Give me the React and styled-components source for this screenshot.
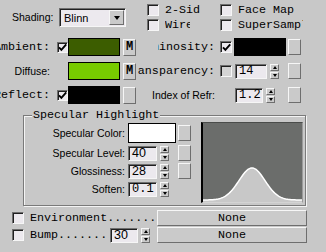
import React from "react";
import styled, { createGlobalStyle, css } from "styled-components";

const SANS = `"Liberation Sans", Arial, sans-serif`;
const MONO = `"Liberation Mono", "Courier New", monospace`;

const GlobalStyle = createGlobalStyle`
  html, body {
    margin: 0;
    padding: 0;
    background: #c8c8c8;
  }
`;

const raised = css`
  box-sizing: border-box;
  background: #cacaca;
  border: 1px solid;
  border-color: #f6f6f6 #6e6e6e #6e6e6e #f6f6f6;
`;

const sunken = css`
  box-sizing: border-box;
  background: #ece9ee;
  border: 1px solid;
  border-color: #6e6e6e #f6f6f6 #f6f6f6 #6e6e6e;
  box-shadow: inset 1px 1px 0 #202020;
`;

const Panel = styled.div`
  width: 326px;
  height: 252px;
  overflow: hidden;
  background: #c8c8c8;
  color: #000;
  font-family: ${MONO};
  font-size: 11.7px;
`;

const Text = styled.span`
  font-family: ${({ $sans }) => ($sans ? SANS : MONO)};
  font-size: ${({ $sans }) => ($sans ? "10.5px" : "11.7px")};
  line-height: 13px;
  white-space: nowrap;
  flex: none;
`;

/* shading dropdown + flags */
const TopRow = styled.div`
  display: flex;
  align-items: flex-start;
  height: 38px;
`;

const ShadingBox = styled.div`
  display: flex;
  align-items: center;
  margin: 8px 0 0 12px;
`;

const ShadingLabel = styled(Text)`
  width: 47px;
`;

const Dropdown = styled.div`
  ${sunken};
  width: 67px;
  height: 19px;
  display: flex;
  align-items: center;
  padding: 0 1px 0 4px;
`;

const DropText = styled.span`
  flex: 1;
  font-family: ${SANS};
  font-size: 11px;
`;

const DropButton = styled.div`
  ${raised};
  width: 15px;
  height: 15px;
  display: flex;
  align-items: center;
  justify-content: center;
`;

const Triangle = styled.span`
  width: 0;
  height: 0;
  border-left: ${({ $w }) => $w}px solid transparent;
  border-right: ${({ $w }) => $w}px solid transparent;
  ${({ $up, $h }) =>
    $up ? `border-bottom: ${$h}px solid #000;` : `border-top: ${$h}px solid #000;`}
`;

const FlagColumn = styled.div`
  display: flex;
  flex-direction: column;
  gap: 3px;
  margin: 4px 0 0 ${({ $ml }) => $ml}px;
  width: ${({ $w }) => $w}px;
`;

const FlagItem = styled.div`
  display: flex;
  align-items: center;
  height: 12px;
  gap: 6px;
`;

const FlagText = styled(Text)`
  max-width: ${({ $clip }) => $clip}px;
  overflow: hidden;
`;

const CheckBox = styled.span`
  ${sunken};
  flex: none;
  display: flex;
  align-items: center;
  justify-content: center;
  width: ${({ $size }) => $size}px;
  height: ${({ $size }) => $size}px;
  background: ${({ $dim }) => ($dim ? "#d4d4d4" : "#ece9ee")};
`;

const Check = ({ checked, dim, size = 12 }) => (
  <CheckBox $dim={dim} $size={size}>
    {checked && (
      <svg width="9" height="9" viewBox="0 0 9 9">
        <path d="M1 4.3 L3.4 6.9 L8.2 1.4" fill="none" stroke="#000" strokeWidth="1.9" />
      </svg>
    )}
  </CheckBox>
);

/* colour / value rows */
const MatRows = styled.div`
  display: flex;
  flex-direction: column;
  gap: 6px;
`;

const MatRow = styled.div`
  display: flex;
  align-items: center;
  height: 18px;
`;

const LeftLabel = styled.div`
  width: 57px;
  flex: none;
  display: flex;
  justify-content: flex-end;
  padding-right: 7px;
  box-sizing: border-box;
`;

const CheckSlot = styled.div`
  width: ${({ $w }) => $w}px;
  margin-left: ${({ $ml }) => $ml || 0}px;
  flex: none;
  display: flex;
  align-items: center;
`;

const Swatch = styled.div`
  flex: none;
  width: ${({ $w }) => $w}px;
  height: ${({ $h }) => $h || 18}px;
  box-sizing: border-box;
  border: 1px solid #000;
  background: ${({ $color }) => $color};
`;

const MapButton = styled.div`
  ${raised};
  flex: none;
  width: 13px;
  height: 17px;
  margin-left: 3px;
  display: flex;
  align-items: center;
  justify-content: center;
  font-family: ${MONO};
  font-weight: bold;
  font-size: 12px;
`;

const RightLabel = styled.div`
  width: 81px;
  flex: none;
  overflow: hidden;
  display: flex;
  justify-content: flex-end;
  padding-right: 2px;
  box-sizing: border-box;
`;

const LabelClip = styled.div`
  flex: none;
  display: flex;
  justify-content: flex-end;
  overflow: hidden;
  ${({ $clip }) => $clip && `max-width: ${$clip}px;`}
`;

const ControlSlot = styled.div`
  width: ${({ $w }) => $w}px;
  margin-left: ${({ $ml }) => $ml || 0}px;
  flex: none;
  display: flex;
  align-items: center;
`;

const SideButton = styled.div`
  ${raised};
  flex: none;
  width: 13px;
  height: 16px;
  margin-left: ${({ $ml }) => $ml || 0}px;
`;

/* spinner */
const SpinWrap = styled.div`
  display: flex;
  align-items: center;
  flex: none;
  margin-left: ${({ $ml }) => $ml || 0}px;
`;

const SpinField = styled.div`
  ${sunken};
  width: ${({ $w }) => $w}px;
  height: 15px;
  padding-left: 3px;
  display: flex;
  align-items: center;
  font-family: ${({ $sans }) => ($sans ? SANS : MONO)};
  font-size: ${({ $sans }) => ($sans ? "12.5px" : "12px")};
`;

const SpinArrows = styled.div`
  display: flex;
  flex-direction: column;
  gap: 1px;
  margin-left: 3px;
`;

const ArrowHalf = styled.div`
  ${raised};
  width: 9px;
  height: 7px;
  display: flex;
  align-items: center;
  justify-content: center;
`;

const Spinner = ({ value, w, sans, ml }) => (
  <SpinWrap $ml={ml}>
    <SpinField $w={w} $sans={sans}>{value}</SpinField>
    <SpinArrows>
      <ArrowHalf><Triangle $up $w={2.5} $h={3} /></ArrowHalf>
      <ArrowHalf><Triangle $w={2.5} $h={3} /></ArrowHalf>
    </SpinArrows>
  </SpinWrap>
);

/* specular group */
const Group = styled.fieldset`
  margin: 5px 0 0 23px;
  width: 283px;
  min-width: 0;
  box-sizing: border-box;
  padding: 1px 2px 2px 0;
  border: 1px solid #7a7a7a;
  box-shadow: inset 1px 1px 0 #f4f4f4, 1px 1px 0 #f4f4f4;
`;

const Legend = styled.legend`
  margin-left: 8px;
  padding: 0 1px;
  background: #c8c8c8;
  font-family: ${MONO};
  font-size: 11.7px;
  line-height: 12px;
`;

const GroupBody = styled.div`
  display: flex;
  align-items: flex-start;
`;

const GroupRows = styled.div`
  width: 177px;
  flex: none;
  display: flex;
  flex-direction: column;
  gap: 2px;
  padding-top: 1px;
`;

const GroupRow = styled.div`
  display: flex;
  align-items: center;
  height: ${({ $h }) => $h}px;
`;

const GroupLabel = styled.div`
  width: 104px;
  flex: none;
  text-align: right;
  padding-right: 3px;
  box-sizing: border-box;
  font-family: ${SANS};
  font-size: 10.5px;
  white-space: nowrap;
`;

const Graph = styled.div`
  width: 102px;
  height: 81px;
  flex: none;
  box-sizing: border-box;
  background: #6b6d6b;
  border-left: 2px solid #000;
  border-top: 1px solid #4a4c4a;
  border-right: 1px solid #9a9a9a;
  border-bottom: 1px solid #d4d4d4;

  svg {
    display: block;
  }
`;

const bellPoints = () => {
  const pts = [];
  for (let x = 0; x <= 99; x += 1) {
    const y = 77 - 32 * Math.exp(-((x - 49) * (x - 49)) / (2 * 13 * 13));
    pts.push(`${x},${y.toFixed(2)}`);
  }
  return pts;
};

const HighlightCurve = () => {
  const pts = bellPoints();
  return (
    <svg width="99" height="79" viewBox="0 0 99 79">
      <path d={`M0,79 L${pts.join(" L")} L99,79 Z`} fill="#c8c8c8" />
      <path d={`M${pts.join(" L")}`} fill="none" stroke="#fff" strokeWidth="1.5" />
    </svg>
  );
};

/* map slots */
const BottomRows = styled.div`
  display: flex;
  flex-direction: column;
  gap: 1px;
  margin-top: 4px;
`;

const BottomRow = styled.div`
  display: flex;
  align-items: center;
  height: 16px;
  padding-left: 12px;
`;

const BottomLeft = styled.div`
  width: 145px;
  flex: none;
  display: flex;
  align-items: center;
`;

const MapLabel = styled(Text)`
  margin-left: 6px;
  width: ${({ $w }) => $w}px;
`;

const NoneButton = styled.div`
  ${raised};
  width: 150px;
  height: 16px;
  display: flex;
  align-items: center;
  justify-content: center;
  font-family: ${MONO};
  font-size: 11.7px;
`;

export default function App() {
  return (
    <>
      <GlobalStyle />
      <Panel>
        <TopRow>
          <ShadingBox>
            <ShadingLabel $sans>Shading:</ShadingLabel>
            <Dropdown>
              <DropText>Blinn</DropText>
              <DropButton>
                <Triangle $w={3.5} $h={4} />
              </DropButton>
            </Dropdown>
          </ShadingBox>
          <FlagColumn $ml={21} $w={73}>
            <FlagItem>
              <Check />
              <FlagText $clip={35}>2-Sided</FlagText>
            </FlagItem>
            <FlagItem>
              <Check />
              <FlagText $clip={25}>Wire</FlagText>
            </FlagItem>
          </FlagColumn>
          <FlagColumn $ml={0} $w={100}>
            <FlagItem>
              <Check />
              <FlagText $clip={65}>Face Map</FlagText>
            </FlagItem>
            <FlagItem>
              <Check />
              <FlagText $clip={65}>SuperSampling</FlagText>
            </FlagItem>
          </FlagColumn>
        </TopRow>

        <MatRows>
          <MatRow>
            <LeftLabel><Text>Ambient:</Text></LeftLabel>
            <CheckSlot $w={11}><Check checked size={11} /></CheckSlot>
            <Swatch $w={52} $color="#3c5d00" />
            <MapButton>M</MapButton>
            <RightLabel>
              <LabelClip $clip={57}><Text>Luminosity:</Text></LabelClip>
            </RightLabel>
            <CheckSlot $w={12} $ml={3}><Check checked /></CheckSlot>
            <ControlSlot $w={52} $ml={2}><Swatch $w={52} $color="#000" /></ControlSlot>
            <SideButton $ml={2} />
          </MatRow>
          <MatRow>
            <LeftLabel><Text $sans>Diffuse:</Text></LeftLabel>
            <CheckSlot $w={11} />
            <Swatch $w={52} $color="#78cb00" />
            <MapButton>M</MapButton>
            <RightLabel>
              <LabelClip $clip={77}><Text>Transparency:</Text></LabelClip>
            </RightLabel>
            <CheckSlot $w={12} $ml={3}><Check dim /></CheckSlot>
            <ControlSlot $w={52} $ml={2}><Spinner value="14" w={32} ml={1} /></ControlSlot>
            <SideButton $ml={2} />
          </MatRow>
          <MatRow>
            <LeftLabel><Text>Reflect:</Text></LeftLabel>
            <CheckSlot $w={11}><Check checked size={11} /></CheckSlot>
            <Swatch $w={52} $color="#000" />
            <MapButton />
            <RightLabel>
              <LabelClip><Text $sans>Index of Refr:</Text></LabelClip>
            </RightLabel>
            <CheckSlot $w={12} $ml={3} />
            <ControlSlot $w={52} $ml={2}><Spinner value="1.2" w={28} ml={1} /></ControlSlot>
            <SideButton $ml={2} />
          </MatRow>
        </MatRows>

        <Group>
          <Legend>Specular Highlight</Legend>
          <GroupBody>
            <GroupRows>
              <GroupRow $h={20}>
                <GroupLabel>Specular Color:</GroupLabel>
                <ControlSlot $w={50}><Swatch $w={48} $h={20} $color="#fff" /></ControlSlot>
                <SideButton />
              </GroupRow>
              <GroupRow $h={16}>
                <GroupLabel>Specular Level:</GroupLabel>
                <ControlSlot $w={50}><Spinner value="40" w={29} sans /></ControlSlot>
                <SideButton />
              </GroupRow>
              <GroupRow $h={16}>
                <GroupLabel>Glossiness:</GroupLabel>
                <ControlSlot $w={50}><Spinner value="28" w={29} sans /></ControlSlot>
                <SideButton />
              </GroupRow>
              <GroupRow $h={16}>
                <GroupLabel>Soften:</GroupLabel>
                <ControlSlot $w={50}><Spinner value="0.1" w={29} /></ControlSlot>
              </GroupRow>
            </GroupRows>
            <Graph>
              <HighlightCurve />
            </Graph>
          </GroupBody>
        </Group>

        <BottomRows>
          <BottomRow>
            <BottomLeft>
              <Check />
              <MapLabel $w={127}>Environment.......</MapLabel>
            </BottomLeft>
            <NoneButton>None</NoneButton>
          </BottomRow>
          <BottomRow>
            <BottomLeft>
              <Check />
              <MapLabel $w={80}>Bump.......</MapLabel>
              <Spinner value="30" w={28} sans />
            </BottomLeft>
            <NoneButton>None</NoneButton>
          </BottomRow>
        </BottomRows>
      </Panel>
    </>
  );
}
